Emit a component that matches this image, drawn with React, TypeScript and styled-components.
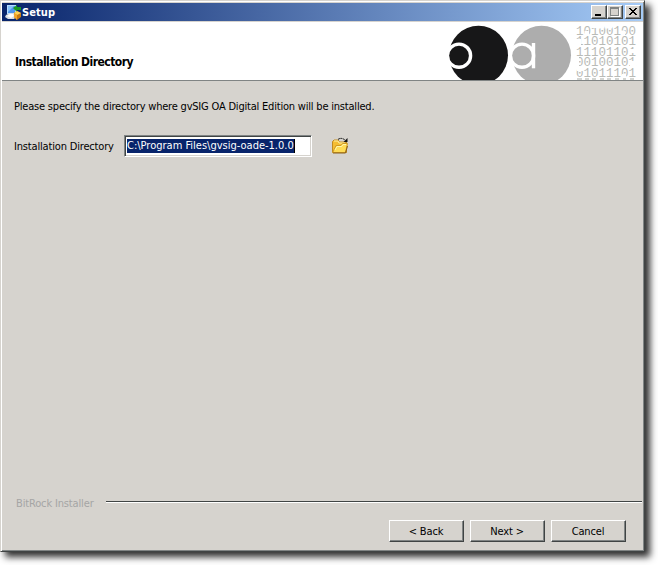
import React from 'react';
import styled, { createGlobalStyle } from 'styled-components';

const Global = createGlobalStyle`
  body { margin: 0; min-height: 565px; background: #fff; overflow: hidden; }
  * { box-sizing: border-box; }
`;

const Dialog = styled.div`
  width: 645px;
  height: 552px;
  display: flex;
  flex-direction: column;
  padding: 2px 1px 1px 1px;
  background: #d6d3ce;
  border: 1px solid;
  border-color: #d6d3ce #404444 #404444 #d6d3ce;
  box-shadow: inset 1px 1px 0 #fff, inset -1px -1px 0 #808484, 5px 5px 7px 0 rgba(0, 0, 0, 0.82);
  color: #000;
  font: 11px/14px 'DejaVu Sans Condensed', 'DejaVu Sans', sans-serif;
  font-stretch: condensed;
`;

const TitleBar = styled.header`
  height: 18px;
  flex: none;
  display: flex;
  align-items: center;
  padding: 0 2px 0 3px;
  background: linear-gradient(90deg, #08246b, #a5cbf7);
`;

const Title = styled.span`
  white-space: nowrap;
  font-weight: bold;
  letter-spacing: 0.1px;
  color: #fff;
  margin: 1px 0 0 1px;
  flex: 1;
`;

const Controls = styled.div`
  display: flex;
`;

const WindowButton = styled.button<{ $gap?: boolean }>`
  width: 16px;
  height: 14px;
  padding: 0;
  margin-left: ${(p) => (p.$gap ? 2 : 0)}px;
  border: 1px solid;
  border-color: #fff #404444 #404444 #fff;
  box-shadow: inset -1px -1px 0 #808484;
  background: #d6d3ce;
  svg { display: block; }
`;

const Banner = styled.section`
  height: 60px;
  flex: none;
  display: flex;
  justify-content: space-between;
  border-top: 1px solid #d6d3ce;
  border-bottom: 1px solid #808484;
  background: #fff;
`;

const Heading = styled.h1`
  margin: 33px 0 0 13px;
  font-size: 12px;
  line-height: 14px;
  letter-spacing: -0.53px;
  white-space: nowrap;
`;

const Body = styled.main`
  flex: 1;
  display: flex;
  flex-direction: column;
  padding: 19px 0 0 12px;
`;

const Text = styled.span<{ $spacing?: number }>`
  white-space: nowrap;
  letter-spacing: ${(p) => p.$spacing ?? 0}px;
`;

const FieldRow = styled.label`
  display: flex;
  align-items: center;
  height: 22px;
  margin-top: 21px;
`;

const FieldName = styled(Text)`
  width: 110px;
  padding-top: 1px;
`;

const Field = styled.div`
  width: 188px;
  height: 22px;
  padding: 2px 1px;
  border: 1px solid;
  border-color: #808484 #fff #fff #808484;
  box-shadow: inset 1px 1px 0 #404444, inset -1px -1px 0 #d6d3ce;
  background: #fff;
  display: flex;
  align-items: center;
  margin-right: 19px;
`;

const Selection = styled(Text)`
  height: 14px;
  width: 168px;
  margin-left: 1px;
  background: #08246b;
  color: #fff;
  border-right: 1px solid #000;
`;

const Divider = styled.div`
  display: flex;
  align-items: center;
  height: 14px;
  margin-left: 14px;
  color: #a5a5a5;
`;

const Brand = styled(Text)`
  width: 90px;
`;

const Rule = styled.div`
  flex: 1;
  height: 2px;
  margin: 0 1px 4px 0;
  background: #404444;
  border-bottom: 1px solid #fff;
`;

const Footer = styled.footer`
  display: flex;
  justify-content: flex-end;
  gap: 6px;
  padding: 9px 17px 8px 0;
`;

const Button = styled.button`
  width: 75px;
  height: 22px;
  padding: 1px 1px 0 0;
  border: 1px solid;
  border-color: #fff #404444 #404444 #fff;
  box-shadow: inset -1px -1px 0 #808484;
  background: #d6d3ce;
  color: #000;
  font: inherit;
  font-stretch: inherit;
  letter-spacing: -0.15px;
`;

const InstallerIcon = () => (
  <svg width="16" height="16" viewBox="0 0 16 16">
    <path d="M2 1H11V10H2Z" fill="#b5dcff" />
    <path d="M3 2H10V9H3Z" fill="#4d96ee" />
    <path d="M3 2H9L3 8Z" fill="#86c1fa" />
    <path d="M1 11 5 9H10L12 12 9 15H3L0 13Z" fill="#d9dee3" />
    <path d="M2 12 5 10H8L9 12 6 14Z" fill="#fff" />
    <path d="M8 4 12 1V3H16V6H12V8Z" fill="#189a24" />
    <path d="M9 9 12 7 16 9V13L12 16 9 13Z" fill="#c97a12" />
    <path d="M9 9 12 7 16 9 12 11Z" fill="#ffd257" />
    <path d="M9 9 12 11V16L9 13Z" fill="#f3a52b" />
  </svg>
);

const FolderIcon = () => (
  <svg width="18" height="18" viewBox="0 0 18 18">
    <path d="M1.5 15.5V4.5L3 3H7L8.5 5H15.5V15.5Z" fill="#f5bd32" stroke="#c08a20" />
    <path d="M3 4H7L8 6H14" stroke="#fff1a4" fill="none" />
    <path d="M1.7 15.5 5 8.5H10L11.5 6.5H16.5L14.5 15.5Z" fill="#ffdc55" stroke="#cf9a25" />
    <path d="M4 13 6 9.5H10.5L12 7.5H15" stroke="#fff7b0" fill="none" />
    <path d="M2 16H14.5L16.5 9" stroke="#8a6018" fill="none" />
    <path d="M7 2.5Q10 0 14 3" stroke="#111" fill="none" strokeDasharray="2 .6" />
    <path d="M16.5 1V5H12.5Z" fill="#111" />
  </svg>
);

const rows = ['10100100', '11010101', '11101101', '00100101', '01011101'];

const Artwork = () => (
  <svg width="195" height="58" viewBox="448 22 195 58">
    <circle cx="478.5" cy="55.3" r="29.5" fill="#171718" />
    <circle cx="541.5" cy="55.3" r="29.5" fill="#adadad" />
    <g fill="none" stroke="#fff" strokeWidth="3.4">
      <circle cx="459" cy="55.7" r="11.6" />
      <circle cx="522" cy="55.7" r="11.6" />
      <path d="M533.5 43V68.3" />
    </g>
    <g fill="#b9bbb7" fontFamily="Liberation Mono" fontSize="12.5">
      {rows.map((row, i) => (
        <text key={i} x="576" y={34.6 + i * 10.6} textLength="60" lengthAdjust="spacing">{row}</text>
      ))}
    </g>
    <path
      d="M577 79H582M585 79H589M592 79H596M600 79H604M607 79H611M615 79H619M623 79H626M630 79H634"
      stroke="#c5c7c3"
      strokeWidth="1.4"
    />
    <path
      d="M584.5 31H589V35H584.5ZM591 25H597V28H591ZM599 25H604.5V28.5H599ZM606.5 25H612V28.5H606.5ZM621 30.5H625V35H621ZM576 39H581V46H576ZM629 49H636V53H629ZM575 57H579V68H575ZM630 61H636V67H630ZM577 68H583V71H577ZM622 74H626V78H622Z"
      fill="#fff"
    />
  </svg>
);

export default function App() {
  return (
    <>
      <Global />
      <Dialog>
        <TitleBar>
          <InstallerIcon />
          <Title>Setup</Title>
          <Controls>
            <WindowButton aria-label="Minimize">
              <svg width="14" height="12"><path d="M3 8H9V10H3Z" /></svg>
            </WindowButton>
            <WindowButton aria-label="Maximize">
              <svg width="14" height="12" shapeRendering="crispEdges">
                <path d="M3 2H12V11H3Z" fill="#fff" />
                <path d="M2 1H11V10H2Z" fill="#808484" />
                <path d="M3 3H10V9H3Z" fill="#d6d3ce" />
              </svg>
            </WindowButton>
            <WindowButton $gap aria-label="Close">
              <svg width="14" height="12" shapeRendering="crispEdges">
                <path d="M3 2H5V3H6V4H8V3H9V2H11V3H10V4H9V5H8V6H9V7H10V8H11V9H9V8H8V7H6V8H5V9H3V8H4V7H5V6H6V5H5V4H4V3H3Z" />
              </svg>
            </WindowButton>
          </Controls>
        </TitleBar>
        <Banner>
          <Heading>Installation Directory</Heading>
          <Artwork />
        </Banner>
        <Body>
          <Text $spacing={-0.2}>Please specify the directory where gvSIG OA Digital Edition will be installed.</Text>
          <FieldRow>
            <FieldName $spacing={-0.17}>Installation Directory</FieldName>
            <Field><Selection>C:\Program Files\gvsig-oade-1.0.0</Selection></Field>
            <FolderIcon />
          </FieldRow>
        </Body>
        <Divider>
          <Brand $spacing={-0.15}>BitRock Installer</Brand>
          <Rule />
        </Divider>
        <Footer>
          <Button>&lt; Back</Button>
          <Button>Next &gt;</Button>
          <Button>Cancel</Button>
        </Footer>
      </Dialog>
    </>
  );
}
